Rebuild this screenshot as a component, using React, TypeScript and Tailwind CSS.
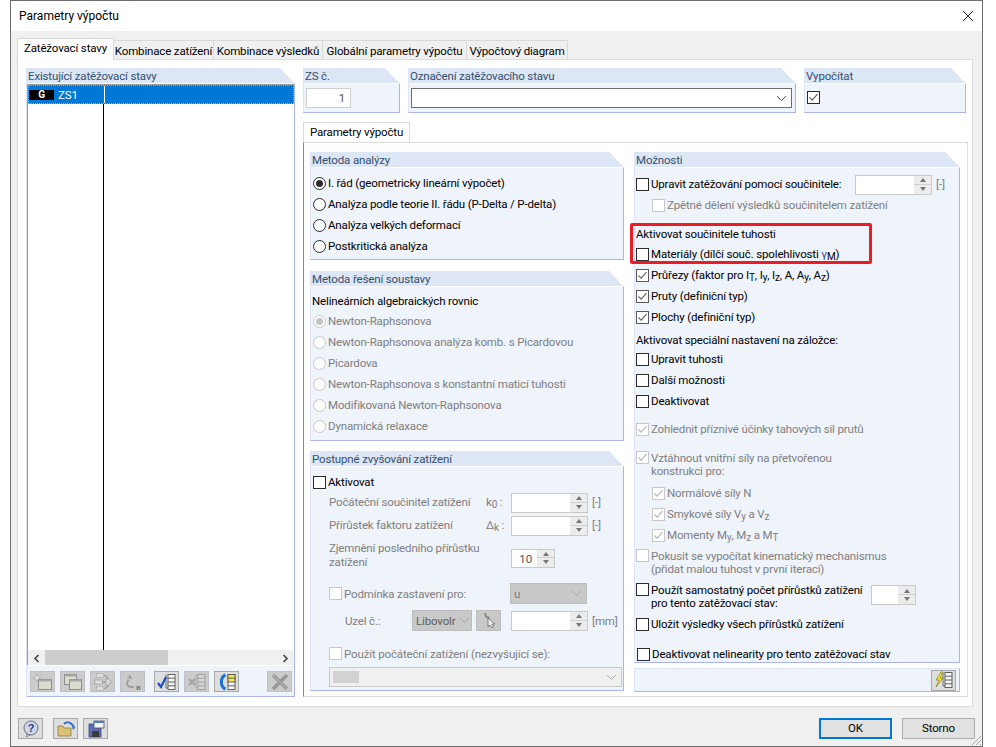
import type { ReactNode } from "react";

const clipped = "[clip-path:polygon(0_0,calc(100%-15px)_0,100%_16px,100%_100%,0_100%)]";

function Panel({ title, className, children }: { title?: string; className: string; children?: ReactNode }) {
    return (
        <div className={`flex flex-col bg-[#eff3fa] border-l border-r border-b border-l-[#dfe4f6] border-r-[#aab4e8] border-b-[#aab4e8] ${clipped} ${className}`}>
            <div className="h-[16px] shrink-0 bg-[#dce6f4] border-b border-white pl-[1px] leading-[17px] text-[#34506f]">{title}</div>
            {children}
        </div>
    );
}

function CheckBox({ checked, disabled, dark }: { checked?: boolean; disabled?: boolean; dark?: boolean }) {
    const border = disabled ? "border-[#c8c8c8]" : checked && !dark ? "border-[#5a5a5a]" : "border-[#2b2b2b]";
    return (
        <span className={`w-[13px] h-[13px] shrink-0 border bg-white flex items-center justify-center ${border} ${disabled ? "bg-[#f7f8fb]" : ""}`}>
            {checked && (
                <svg width="11" height="11" viewBox="0 0 11 11" fill="none">
                    <path d="M1.5 5.5 L4.2 8.2 L9.5 2.2" stroke={disabled ? "#b4b4b4" : "#5f5f5f"} strokeWidth="1.1" />
                </svg>
            )}
        </span>
    );
}

function Radio({ checked, disabled }: { checked?: boolean; disabled?: boolean }) {
    return (
        <span className={`w-[13px] h-[13px] shrink-0 rounded-full border bg-white flex items-center justify-center ${disabled ? "border-[#c8c8c8]" : "border-[#2b2b2b]"}`}>
            {checked && <span className={`w-[7px] h-[7px] rounded-full ${disabled ? "bg-[#c4c4c4]" : "bg-[#2b2b2b]"}`} />}
        </span>
    );
}

function CheckRow({ label, checked, disabled, indent = "", height = "h-[21px]", extra = "" }: { label: ReactNode; checked?: boolean; disabled?: boolean; indent?: string; height?: string; extra?: string }) {
    return (
        <div className={`flex items-center gap-[2px] ${height} ${indent} ${extra} ${disabled ? "text-[#808080]" : "text-black"}`}>
            <CheckBox checked={checked} disabled={disabled} />
            <span className="whitespace-nowrap mb-[2px]">{label}</span>
        </div>
    );
}

function CheckRow2({ lines, checked, disabled, extra = "" }: { lines: [string, string]; checked?: boolean; disabled?: boolean; extra?: string }) {
    return (
        <div className={`flex items-start gap-[2px] ${extra} ${disabled ? "text-[#808080]" : "text-black"}`}>
            <span className="mt-[-1px]">
                <CheckBox checked={checked} disabled={disabled} />
            </span>
            <div className="leading-[13px] whitespace-nowrap">
                <div>{lines[0]}</div>
                <div>{lines[1]}</div>
            </div>
        </div>
    );
}

function RadioRow({ label, checked, disabled }: { label: string; checked?: boolean; disabled?: boolean }) {
    return (
        <div className={`flex items-center gap-[2px] h-[21px] pl-[2px] whitespace-nowrap ${disabled ? "text-[#808080]" : "text-black"}`}>
            <Radio checked={checked} disabled={disabled} />
            <span className="mb-[2px]">{label}</span>
        </div>
    );
}

function Spinner({ value, className }: { value?: string; className: string }) {
    return (
        <div className={`flex border border-[#c9c9c9] bg-white shrink-0 ${className}`}>
            <div className="flex-1 text-right pr-[5px] text-[#555] leading-[18px]">{value}</div>
            <div className="w-[17px] bg-[#ececec] flex flex-col items-center justify-around py-[2px]">
                <span className="w-0 h-0 border-x-[3px] border-x-transparent border-b-[4px] border-b-[#777]" />
                <span className="w-full h-px bg-[#d0d0d0]" />
                <span className="w-0 h-0 border-x-[3px] border-x-transparent border-t-[4px] border-t-[#777]" />
            </div>
        </div>
    );
}

function Chevron({ color = "#777" }: { color?: string }) {
    return (
        <svg width="11" height="7" viewBox="0 0 11 7" fill="none">
            <path d="M1 1 L5.5 5.5 L10 1" stroke={color} strokeWidth="1" />
        </svg>
    );
}

function Sub({ children }: { children: string }) {
    return <span className="text-[10px] leading-none align-[-2px]">{children}</span>;
}

// Small tree list that several toolbar icons share
function ListLines({ x = 12, stroke = "#555", fill = "#f4f4f4" }: { x?: number; stroke?: string; fill?: string }) {
    return (
        <g>
            <path d={`M${x - 2} 2.5 V16 H${x}`} stroke={stroke} strokeWidth="0.8" />
            <rect x={x} y="2.5" width="7" height="15" fill={fill} stroke={stroke} strokeWidth="0.9" />
            <path d={`M${x} 6.2 H${x + 7} M${x} 10 H${x + 7} M${x} 13.8 H${x + 7}`} stroke={stroke} strokeWidth="0.9" />
        </g>
    );
}

function ToolIcon({ kind }: { kind: number }) {
    const common = { width: 22, height: 20, viewBox: "0 0 22 20", fill: "none" };
    if (kind === 0)
        return (
            <svg {...common}>
                <rect x="6.5" y="7.5" width="13" height="10" fill="#dcdccf" stroke="#8c8c8c" />
                <rect x="6.5" y="7.5" width="13" height="2" fill="#a8a8a8" />
                <path d="M5 2 L6 5 L9 6 L6 7 L5 10 L4 7 L1 6 L4 5 Z" fill="#efefef" stroke="#a2a2a2" strokeWidth="0.6" />
            </svg>
        );
    if (kind === 1)
        return (
            <svg {...common}>
                <rect x="2.5" y="2.5" width="12" height="10" fill="#dcdccf" stroke="#8c8c8c" />
                <rect x="2.5" y="2.5" width="12" height="2" fill="#a8a8a8" />
                <rect x="7.5" y="7.5" width="12" height="10" fill="#dcdccf" stroke="#8c8c8c" />
                <rect x="7.5" y="7.5" width="12" height="2" fill="#a8a8a8" />
            </svg>
        );
    if (kind === 2)
        return (
            <svg {...common}>
                <g stroke="#a0a0a0" strokeWidth="0.8" fill="#dedede">
                    <rect x="4.5" y="1.5" width="7" height="4" strokeDasharray="1.5 1" />
                    <rect x="4.5" y="14.5" width="7" height="4" strokeDasharray="1.5 1" />
                    <rect x="2.5" y="8" width="8" height="4" />
                    <path d="M14 6 L20 10 L14 14 Z" />
                </g>
                <path d="M12 3.5 C15 4 16 5 16 7 M12 16.5 C15 16 16 15 16 13 M10.5 10 H14" stroke="#8c8c8c" />
            </svg>
        );
    if (kind === 3)
        return (
            <svg {...common}>
                <text x="5" y="7" fontSize="7" fontWeight="700" fill="#8c8c8c" fontFamily="Liberation Serif, serif">A</text>
                <text x="14" y="18" fontSize="7" fontWeight="700" fill="#6e6e6e" fontFamily="Liberation Serif, serif">B</text>
                <path d="M7 8 C3 11 5 16 12 15" stroke="#9a9a9a" strokeWidth="1.6" />
            </svg>
        );
    if (kind === 4)
        return (
            <svg {...common}>
                <ListLines />
                <path d="M2 11 L5 15 L10 5" stroke="#1c4fc0" strokeWidth="2.2" />
            </svg>
        );
    if (kind === 5)
        return (
            <svg {...common}>
                <ListLines stroke="#9c9c9c" fill="#d6d6d6" />
                <path d="M3 7 L9 13 M9 7 L3 13" stroke="#a4a4a4" strokeWidth="2" />
            </svg>
        );
    if (kind === 6)
        return (
            <svg {...common}>
                <g>
                    <rect x="12" y="2.5" width="7" height="15" fill="#f4f4f4" stroke="#555" strokeWidth="0.9" />
                    <rect x="12" y="2.5" width="7" height="7.5" fill="#f6e64a" stroke="#555" strokeWidth="0.9" />
                    <path d="M12 6.2 H19 M12 13.8 H19" stroke="#555" strokeWidth="0.9" />
                </g>
                <path d="M9.5 3 C4 5 4 15 9.5 17" stroke="#1b6fd8" strokeWidth="3" />
            </svg>
        );
    return (
        <svg {...common}>
            <path d="M4 3 L18 17 M18 3 L4 17" stroke="#979797" strokeWidth="3.4" />
            <path d="M4 3 L18 17" stroke="#bcbcbc" strokeWidth="1" />
        </svg>
    );
}

function ToolBtn({ kind, enabled, extra = "" }: { kind: number; enabled?: boolean; extra?: string }) {
    return (
        <div className={`w-[25px] h-[21px] shrink-0 border flex items-center justify-center ${enabled ? "bg-[#dedede] border-[#a8a8a8]" : "bg-[#cbcbcb] border-[#c0c0c0]"} ${extra}`}>
            <ToolIcon kind={kind} />
        </div>
    );
}

function FooterBtn({ children, extra = "" }: { children: ReactNode; extra?: string }) {
    return <div className={`w-[25px] h-[21px] bg-[#dedede] border border-[#a8a8a8] flex items-center justify-center ${extra}`}>{children}</div>;
}

const tabs = [
    { label: "Kombinace zatížení", w: "w-[100px]" },
    { label: "Kombinace výsledků", w: "w-[109px]" },
    { label: "Globální parametry výpočtu", w: "w-[144px]" },
    { label: "Výpočtový diagram", w: "w-[101px]" },
];

const solverMethods = [
    "Newton-Raphsonova",
    "Newton-Raphsonova analýza komb. s Picardovou",
    "Picardova",
    "Newton-Raphsonova s konstantní maticí tuhosti",
    "Modifikovaná Newton-Raphsonova",
    "Dynamická relaxace",
];

export default function App() {
    return (
        <div className="w-[996px] h-[747px] bg-white overflow-hidden pl-[10px] text-[11.5px] tracking-[-0.15px] leading-[16px] text-black font-['Roboto','Noto_Sans',sans-serif]">
            <div className="relative w-[973px] h-[747px] border border-[#6e6e6e] flex flex-col">
                {/* Title bar */}
                <div className="h-[30px] shrink-0 bg-white flex items-center justify-between pl-[8px] pr-[8px]">
                    <span className="text-[12px] tracking-normal">Parametry výpočtu</span>
                    <svg width="12" height="12" viewBox="0 0 12 12" fill="none">
                        <path d="M1 1 L11 11 M11 1 L1 11" stroke="#222" strokeWidth="1" />
                    </svg>
                </div>

                <div className="flex-1 bg-[#f0f0f0] pt-[7px] pl-[6px]">
                    {/* Main tabs */}
                    <div className="flex items-end h-[21px] relative z-10">
                        <div className="w-[97px] h-[22px] mb-[-1px] bg-white border border-b-0 border-[#d9d9d9] text-center leading-[19px] whitespace-nowrap">Zatěžovací stavy</div>
                        {tabs.map((t) => (
                            <div key={t.label} className={`${t.w} h-[19px] border border-b-0 border-l-0 border-[#d9d9d9] text-center leading-[20px] whitespace-nowrap`}>
                                {t.label}
                            </div>
                        ))}
                    </div>

                    <div className="w-[956px] h-[648px] bg-white border border-[#dcdcdc] pt-[8px] pl-[8px] flex gap-[8px]">
                        {/* Load case list */}
                        <Panel title="Existující zatěžovací stavy" className="w-[269px] h-[629px]">
                            <div className="flex-1 flex flex-col bg-white border-t border-l border-[#9a9a9a] min-h-0">
                                <div className="h-[19px] shrink-0 bg-[#0078d7] border border-dotted border-[#d8a468] flex items-center relative">
                                    <span className="w-[25px] h-[10px] bg-black text-white font-bold text-[10px] leading-[10px] text-center">G</span>
                                    <span className="ml-[4px] text-white">ZS1</span>
                                    <span className="absolute left-[75px] top-0 bottom-0 w-px bg-white" />
                                </div>
                                <div className="flex-1 ml-[75px] w-px bg-black" />
                                <div className="h-[15px] shrink-0 bg-[#f0f0f0] flex items-center relative">
                                    <span className="w-[17px] text-center">
                                        <svg className="inline" width="7" height="9" viewBox="0 0 7 9" fill="none">
                                            <path d="M5.5 1 L2 4.5 L5.5 8" stroke="#444" strokeWidth="1.6" />
                                        </svg>
                                    </span>
                                    <span className="w-[123px] h-[15px] bg-[#cdcdcd]" />
                                    <span className="ml-auto w-[17px] text-center">
                                        <svg className="inline" width="7" height="9" viewBox="0 0 7 9" fill="none">
                                            <path d="M1.5 1 L5 4.5 L1.5 8" stroke="#444" strokeWidth="1.6" />
                                        </svg>
                                    </span>
                                </div>
                            </div>
                            <div className="h-[31px] shrink-0 border-t border-white flex items-center pl-[3px] gap-[5px] pt-[1px]">
                                <ToolBtn kind={0} />
                                <ToolBtn kind={1} />
                                <ToolBtn kind={2} />
                                <ToolBtn kind={3} />
                                <ToolBtn kind={4} enabled extra="ml-[4px]" />
                                <ToolBtn kind={5} />
                                <ToolBtn kind={6} enabled />
                                <ToolBtn kind={7} extra="ml-[23px]" />
                            </div>
                        </Panel>

                        <div className="w-[665px] flex flex-col">
                            <div className="flex h-[45px]">
                                <Panel title="ZS č." className="w-[97px] h-[45px]">
                                    <div className="pl-[2px] pt-[4px]">
                                        <div className="w-[45px] h-[20px] border border-[#cfcfcf] bg-white text-right pr-[5px] text-[#555] leading-[19px]">1</div>
                                    </div>
                                </Panel>
                                <Panel title="Označení zatěžovacího stavu" className="w-[388px] h-[45px] ml-[8px]">
                                    <div className="pl-[2px] pt-[4px]">
                                        <div className="w-[381px] h-[20px] border border-[#6e6e6e] bg-white flex items-center justify-end pr-[4px]">
                                            <Chevron color="#555" />
                                        </div>
                                    </div>
                                </Panel>
                                <Panel title="Vypočítat" className="w-[162px] h-[45px] ml-[8px]">
                                    <div className="pl-[2px] pt-[7px]">
                                        <CheckBox checked dark />
                                    </div>
                                </Panel>
                            </div>

                            <div className="mt-[9px] h-[20px] w-[107px] bg-white border border-b-0 border-[#dcdcdc] text-center leading-[19px] relative z-10 whitespace-nowrap">Parametry výpočtu</div>

                            <div className="w-[665px] h-[555px] border border-[#dcdcdc] border-l-[#8a8a8a] pt-[9px] pl-[6px] flex gap-[10px]">
                                {/* Left column */}
                                <div className="w-[314px] flex flex-col">
                                    <Panel title="Metoda analýzy" className="h-[108px]">
                                        <div className="pt-[5px]">
                                            <RadioRow label="I. řád (geometricky lineární výpočet)" checked />
                                            <RadioRow label="Analýza podle teorie II. řádu (P-Delta / P-delta)" />
                                            <RadioRow label="Analýza velkých deformací" />
                                            <RadioRow label="Postkritická analýza" />
                                        </div>
                                    </Panel>
                                    <Panel title="Metoda řešení soustavy" className="h-[170px] mt-[11px]">
                                        <div className="pt-[4px]">
                                            <div className="h-[20px] pl-[1px] flex items-center">Nelineárních algebraických rovnic</div>
                                            {solverMethods.map((m, i) => (
                                                <RadioRow key={m} label={m} disabled checked={i === 0} />
                                            ))}
                                        </div>
                                    </Panel>
                                    <Panel title="Postupné zvyšování zatížení" className="h-[240px] mt-[10px]">
                                        <div className="pt-[5px] pl-[2px] text-[#808080]">
                                            <CheckRow label="Aktivovat" />
                                            <div className="flex items-center h-[23px] mt-[-2px] pl-[16px] whitespace-nowrap">
                                                <span className="w-[157px] mb-[2px]">Počáteční součinitel zatížení</span>
                                                <span className="w-[25px] mb-[2px]">k<Sub>0</Sub> :</span>
                                                <Spinner className="w-[77px] h-[20px]" />
                                                <span className="ml-[4px] mb-[2px]">[-]</span>
                                            </div>
                                            <div className="flex items-center h-[23px] pl-[16px] whitespace-nowrap">
                                                <span className="w-[157px] mb-[2px]">Přírůstek faktoru zatížení</span>
                                                <span className="w-[25px] mb-[2px]">Δ<Sub>k</Sub> :</span>
                                                <Spinner className="w-[77px] h-[20px]" />
                                                <span className="ml-[4px] mb-[2px]">[-]</span>
                                            </div>
                                            <div className="flex items-center h-[34px] mt-[4px] pl-[16px]">
                                                <div className="w-[182px] leading-[14px] mb-[6px]">Zjemnění posledního přírůstku zatížení</div>
                                                <Spinner value="10" className="w-[44px] h-[19px]" />
                                            </div>
                                            <div className="flex items-center h-[21px] mt-[8px] pl-[16px]">
                                                <CheckBox disabled />
                                                <span className="ml-[2px] w-[166px] whitespace-nowrap">Podmínka zastavení pro:</span>
                                                <div className="w-[77px] h-[21px] bg-[#c9c9c9] border border-[#bdbdbd] flex items-center justify-between pl-[3px] pr-[4px]">
                                                    <span>u</span>
                                                    <Chevron color="#a8a8a8" />
                                                </div>
                                            </div>
                                            <div className="flex items-center h-[21px] mt-[6px] pl-[32px]">
                                                <span className="w-[67px]">Uzel č.:</span>
                                                <div className="w-[60px] h-[21px] bg-[#c9c9c9] border border-[#bdbdbd] flex items-center pl-[3px] text-[#606060]">
                                                    <span className="whitespace-nowrap w-[40px] shrink-0">Libovolr</span>
                                                    <span className="ml-[3px]"><Chevron color="#a8a8a8" /></span>
                                                </div>
                                                <div className="w-[25px] h-[21px] ml-[4px] bg-[#c9c9c9] border border-[#bdbdbd] flex items-center justify-center">
                                                    <svg width="16" height="17" viewBox="0 0 16 17" fill="none">
                                                        <path d="M3 1 L5 1 L6 4 L9 5 L7 7 L4 5 Z" fill="#8c8c8c" />
                                                        <path d="M7 6 L7 15 L9 13 L11 16 L12.5 15 L11 12 L14 12 Z" fill="#f0f0f0" stroke="#666" strokeWidth="0.8" />
                                                    </svg>
                                                </div>
                                                <Spinner className="w-[77px] h-[20px] ml-[10px]" />
                                                <span className="ml-[4px]">[mm]</span>
                                            </div>
                                            <div className="flex items-center h-[21px] mt-[12px] pl-[16px]">
                                                <CheckBox disabled />
                                                <span className="ml-[2px] whitespace-nowrap">Použít počáteční zatížení (nezvyšující se):</span>
                                            </div>
                                            <div className="w-[293px] h-[20px] ml-[16px] mt-[3px] border border-[#c9c9c9] bg-[#f0f0f0] flex items-center justify-between pl-[3px] pr-[4px]">
                                                <span className="w-[26px] h-[12px] bg-[#d2d2d2]" />
                                                <Chevron color="#a8a8a8" />
                                            </div>
                                        </div>
                                    </Panel>
                                </div>

                                {/* Right column */}
                                <div className="w-[326px] flex flex-col">
                                    <Panel title="Možnosti" className="h-[511px]">
                                        <div className="pt-[6px] pl-[1px]">
                                            <div className="flex items-center h-[21px]">
                                                <CheckBox />
                                                <span className="ml-[2px] w-[204px] whitespace-nowrap mb-[2px]">Upravit zatěžování pomocí součinitele:</span>
                                                <Spinner className="w-[77px] h-[20px]" />
                                                <span className="ml-[4px] text-[#808080] mb-[2px]">[-]</span>
                                            </div>
                                            <CheckRow label="Zpětné dělení výsledků součinitelem zatížení" disabled indent="pl-[16px]" />
                                            <div className="h-[20px] mt-[8px] flex items-center">Aktivovat součinitele tuhosti</div>
                                            <CheckRow label={<>Materiály (dílčí souč. spolehlivosti <span className="text-[#3b4f8f]">γ</span><Sub>M</Sub>)</>} />
                                            <CheckRow label={<>Průřezy (faktor pro I<Sub>T</Sub>, I<Sub>y</Sub>, I<Sub>z</Sub>, A, A<Sub>y</Sub>, A<Sub>z</Sub>)</>} checked />
                                            <CheckRow label="Pruty (definiční typ)" checked />
                                            <CheckRow label="Plochy (definiční typ)" checked />
                                            <div className="h-[19px] mt-[2px] flex items-center">Aktivovat speciální nastavení na záložce:</div>
                                            <CheckRow label="Upravit tuhosti" />
                                            <CheckRow label="Další možnosti" />
                                            <CheckRow label="Deaktivovat" />
                                            <CheckRow label="Zohlednit příznivé účinky tahových sil prutů" checked disabled extra="mt-[7px]" />
                                            <CheckRow2 lines={["Vztáhnout vnitřní síly na přetvořenou", "konstrukci pro:"]} checked disabled extra="mt-[12px]" />
                                            <CheckRow label="Normálové síly N" checked disabled indent="pl-[16px]" extra="mt-[5px]" />
                                            <CheckRow label={<>Smykové síly V<Sub>y</Sub> a V<Sub>z</Sub></>} checked disabled indent="pl-[16px]" />
                                            <CheckRow label={<>Momenty M<Sub>y</Sub>, M<Sub>z</Sub> a M<Sub>T</Sub></>} checked disabled indent="pl-[16px]" />
                                            <CheckRow2 lines={["Pokusit se vypočítat kinematický mechanismus", "(přidat malou tuhost v první iteraci)"]} disabled extra="mt-[4px]" />
                                            <div className="flex items-start mt-[8px] h-[26px]">
                                                <CheckRow2 lines={["Použít samostatný počet přírůstků zatížení", "pro tento zatěžovací stav:"]} extra="w-[235px]" />
                                                <Spinner className="w-[45px] h-[20px] mt-[1px]" />
                                            </div>
                                            <CheckRow label="Uložit výsledky všech přírůstků zatížení" extra="mt-[4px]" />
                                            <CheckRow label="Deaktivovat nelinearity pro tento zatěžovací stav" height="h-[17px]" indent="pl-[1px]" extra="mt-[11px]" />
                                        </div>
                                    </Panel>
                                    <div className="h-[24px] mt-[5px] bg-[#eff3fa] border border-[#dfe4f6] border-r-[#aab4e8] border-b-[#aab4e8] flex items-center justify-end pr-[3px]">
                                        <div className="w-[25px] h-[21px] bg-[#dedede] border border-[#a8a8a8] flex items-center justify-center">
                                            <svg width="22" height="20" viewBox="0 0 22 20" fill="none">
                                                <ListLines />
                                                <path d="M8 2 L3 10 L6 10 L3 17 L10 8 L7 8 L10 2 Z" fill="#f5e628" stroke="#6b6b20" strokeWidth="0.6" />
                                            </svg>
                                        </div>
                                    </div>
                                </div>
                            </div>
                        </div>
                    </div>

                    {/* Footer buttons */}
                    <div className="flex items-center mt-[11px] pl-[1px]">
                        <FooterBtn>
                            <svg width="18" height="18" viewBox="0 0 18 18" fill="none">
                                <circle cx="9" cy="8" r="7" fill="#cfd6ea" stroke="#6b6f80" />
                                <path d="M5 14 L4 17 L8 15 Z" fill="#cfd6ea" stroke="#6b6f80" strokeWidth="0.7" />
                                <text x="9" y="12" textAnchor="middle" fontSize="11" fontWeight="700" fill="#2a3f8a" fontFamily="Liberation Sans, sans-serif">?</text>
                            </svg>
                        </FooterBtn>
                        <FooterBtn extra="ml-[10px]">
                            <svg width="20" height="18" viewBox="0 0 20 18" fill="none">
                                <path d="M2 6 L7 6 L8 8 L15 8 L15 16 L2 16 Z" fill="#d9c277" stroke="#8d7a3a" strokeWidth="0.8" />
                                <path d="M8 4 C11 1 16 2 18 8" stroke="#3d6fc4" strokeWidth="2" />
                                <path d="M16 8 L19 6 L18 10 Z" fill="#3d6fc4" />
                            </svg>
                        </FooterBtn>
                        <FooterBtn extra="ml-[5px]">
                            <svg width="18" height="18" viewBox="0 0 18 18" fill="none">
                                <rect x="2" y="4" width="12" height="13" fill="#5d6fb4" stroke="#3c4a80" strokeWidth="0.8" />
                                <rect x="5" y="11" width="7" height="6" fill="#3a3a3a" />
                                <rect x="7" y="1" width="10" height="7" fill="#f4f4f4" stroke="#555" strokeWidth="0.8" />
                                <rect x="7" y="1" width="10" height="2" fill="#4b7cc8" />
                            </svg>
                        </FooterBtn>
                        <div className="ml-[711px] w-[73px] h-[21px] bg-[#e1e1e1] border-2 border-[#0078d7] text-center leading-[17px]">OK</div>
                        <div className="ml-[10px] w-[73px] h-[21px] bg-[#e1e1e1] border border-[#adadad] text-center leading-[19px]">Storno</div>
                    </div>
                </div>

                {/* Highlight frame drawn over the dialog */}
                <div className="absolute left-[619px] top-[222px] w-[242px] h-[41px] border-[3px] border-[#ed1c24] rounded-[2px] pointer-events-none" />
                <svg className="absolute right-0 bottom-0" width="12" height="12" viewBox="0 0 12 12" fill="none">
                    <path d="M11 2 L2 11 M11 6 L6 11 M11 10 L10 11" stroke="#a8a8a8" />
                </svg>
            </div>
        </div>
    );
}
